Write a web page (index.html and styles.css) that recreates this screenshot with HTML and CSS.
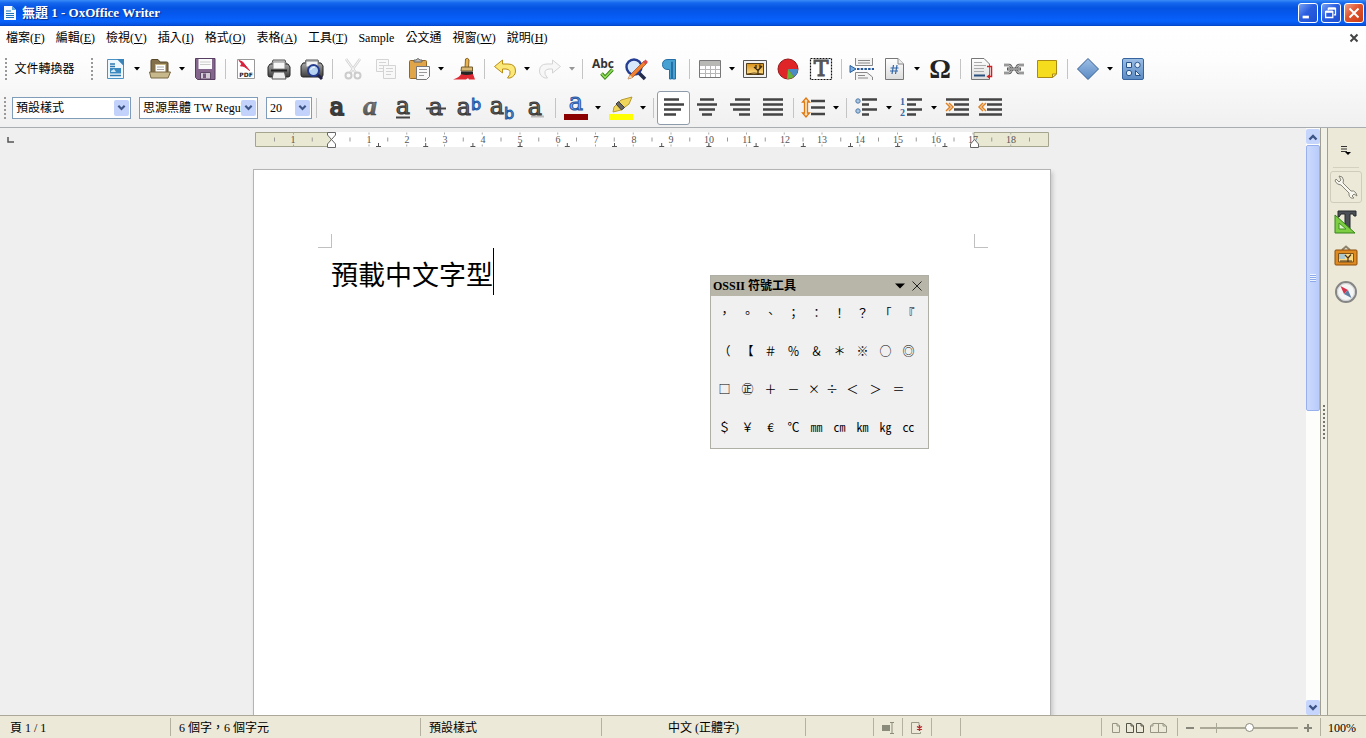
FILE: index.html
```html
<!DOCTYPE html>
<html lang="zh-Hant">
<head>
<meta charset="utf-8">
<title>無題 1 - OxOffice Writer</title>
<link rel="stylesheet" href="styles.css">
</head>
<body>
<svg class="defs" aria-hidden="true">
  <defs>
    <linearGradient id="paper" x1="0" y1="0" x2="0" y2="1"><stop offset="0" stop-color="#fff"/><stop offset="1" stop-color="#dcdcdc"/></linearGradient>
    <linearGradient id="metal" x1="0" y1="0" x2="0" y2="1"><stop offset="0" stop-color="#a8a8a8"/><stop offset="1" stop-color="#3c3c3c"/></linearGradient>
    <linearGradient id="ink" x1="0" y1="0" x2="0" y2="1"><stop offset="0" stop-color="#989898"/><stop offset="1" stop-color="#484848"/></linearGradient>
    <linearGradient id="blue" x1="0" y1="0" x2="0" y2="1"><stop offset="0" stop-color="#9dbfe6"/><stop offset="1" stop-color="#5a8ac2"/></linearGradient>
    <linearGradient id="sunset" x1="0" y1="0" x2="0" y2="1"><stop offset="0" stop-color="#d89018"/><stop offset="1" stop-color="#ffe08a"/></linearGradient>
    <symbol id="down" viewBox="0 0 6 4"><path d="M0 0H6L3 3.5Z"/></symbol>
    <symbol id="chev" viewBox="0 0 10 8"><path d="M1.5 1.5L5 5L8.500 1.500" fill="none" stroke="#3c5586" stroke-width="2.400"/></symbol>
  </defs>
</svg>

<header>
  <div class="titlebar">
    <svg class="app-icon" viewBox="0 0 12 16"><path d="M0 1H8L12 5V15H0Z" fill="#f4faff"/><path d="M8 1V5H12Z" fill="#58a6dc"/><path d="M2 6H7M2 8.500H10M2 10.500H10M2 12.500H10" stroke="#1b75b8"/></svg>
    <h1>無題 1 - OxOffice Writer</h1>
    <button class="win" aria-label="最小化"><svg viewBox="0 0 20 20"><path d="M4 14.500H11" stroke="#fff" stroke-width="3"/></svg></button>
    <button class="win" aria-label="還原"><svg viewBox="0 0 20 20" fill="none" stroke="#fff"><path d="M7 7V5H15V12H13" stroke-width="1.400"/><path d="M7 5H15" stroke-width="2.500"/><path d="M4 8.500H12V15H4Z" stroke-width="1.400"/><path d="M4 8.500H12" stroke-width="2.500"/></svg></button>
    <button class="win close" aria-label="關閉"><svg viewBox="0 0 20 20"><path d="M5 5L15 15M15 5L5 15" stroke="#fff" stroke-width="2.200"/></svg></button>
  </div>
  <nav class="menubar">
    <button>檔案(<u>F</u>)</button><button>編輯(<u>E</u>)</button><button>檢視(<u>V</u>)</button><button>插入(<u>I</u>)</button><button>格式(<u>O</u>)</button><button>表格(<u>A</u>)</button><button>工具(<u>T</u>)</button><button>Sample</button><button>公文通</button><button>視窗(<u>W</u>)</button><button>說明(<u>H</u>)</button>
    <button class="doc-close" aria-label="關閉文件"><svg viewBox="0 0 10 10"><path d="M1.500 1.500L8.500 8.500M8.500 1.500L1.500 8.500" stroke="#444" stroke-width="2"/></svg></button>
  </nav>

  <div class="toolbar">
    <i class="grip"></i><button class="convert">文件轉換器</button><i class="grip second"></i>
    <button class="tool" aria-label="新增"><svg viewBox="0 0 24 24"><path d="M4.500 2.500H15L20.500 8V21.500H4.500Z" fill="#eef7fd" stroke="#4a93c4"/><path d="M14 2H21V9Z" fill="#3a84ba"/><path d="M7 7H12M7 9.500H12M7 18.500H18" stroke="#2f78b0" stroke-width="1.500"/><path d="M7 11H18V16.500H7Z" fill="#3c89c0"/><path d="M8 14L11 12L13 15H8" fill="#cfe8f7"/></svg></button><button class="drop" aria-label="新增選項"><svg><use href="#down"/></svg></button>
    <button class="tool" aria-label="開啟"><svg viewBox="0 0 24 24"><path d="M3 18V4Q3 2.500 4 2.500H10L12 5H18.500Q20 5 20 6V15" fill="#85704c" stroke="#584828"/><path d="M7.500 7.500H17.500V17H7.500Z" fill="#fff" stroke="#c8b884"/><path d="M9 10H16M9 12.500H16" stroke="#aaa"/><path d="M1.500 15H22.500L20 21H3Z" fill="#c8b98c" stroke="#786640"/></svg></button><button class="drop" aria-label="開啟選項"><svg><use href="#down"/></svg></button>
    <button class="tool" aria-label="儲存"><svg viewBox="0 0 24 24"><path d="M2.500 1.500H22V22.500H4.500L2.500 20.500Z" fill="#84658c" stroke="#573d60"/><path d="M5.500 2H19V12H5.500Z" fill="#fafafa"/><path d="M7 5H17.500M7 7.500H17.500" stroke="#ccc"/><path d="M7.500 15.500H17.500V22H7.500Z" fill="#d3cbd6" stroke="#5e4867"/><path d="M10 16.500H13V21H10Z" fill="#765881"/></svg></button><i class="sep"></i>
    <button class="tool" aria-label="匯出為 PDF"><svg viewBox="0 0 24 24"><path d="M3.500 2.500H20.500V21.500H3.500Z" fill="#fff" stroke="#999"/><path d="M5 3.500Q9 4 11 8L15.500 13.500L11 10Q9 8.500 6.500 9Q9 7 5 3.500Z" fill="#d9203c" stroke="#d9203c"/><text x="12" y="20" text-anchor="middle" class="pdf">PDF</text></svg></button>
    <button class="tool" aria-label="列印"><svg viewBox="0 0 24 24"><path d="M6 3H18L20 9H4Z" fill="#ddd" stroke="#555"/><path d="M3 7H21L23 10V18Q23 20 21 20H3Q1 20 1 18V10Z" fill="url(#metal)" stroke="#252525"/><path d="M6 5H18V12H6Z" fill="#f8f8f8" stroke="#888"/><path d="M4 13.500H20" stroke="#222" stroke-width="2"/><path d="M6.500 15H17.500L19 22H5Z" fill="#eee" stroke="#555"/></svg></button>
    <button class="tool" aria-label="預覽列印"><svg viewBox="0 0 24 24"><path d="M6 3H18L20 9H4Z" fill="#ddd" stroke="#555"/><path d="M3 6H21L23 9V18Q23 20 21 20H3Q1 20 1 18V9Z" fill="url(#metal)" stroke="#252525"/><path d="M6 4H18V10H6Z" fill="#f4f4f4" stroke="#888"/><path d="M17 17L22 22" stroke="#232348" stroke-width="3"/><circle cx="13.500" cy="13.500" r="5.500" fill="#b6d2f1" stroke="#263c90" stroke-width="2"/><path d="M10.500 13Q12 10 15 10" fill="none" stroke="#fff"/></svg></button><i class="sep"></i>
    <button class="tool faded" aria-label="剪下" disabled><svg viewBox="0 0 24 24"><path d="M5 2L15 16M19 2L9 16" stroke="#999" stroke-width="2.500"/><path d="M5 2L15 16M19 2L9 16" stroke="#eee"/><circle cx="7.500" cy="18.500" r="3" fill="none" stroke="#888" stroke-width="2"/><circle cx="16.500" cy="18.500" r="3" fill="none" stroke="#888" stroke-width="2"/></svg></button>
    <button class="tool faded" aria-label="複製" disabled><svg viewBox="0 0 24 24" fill="#f6f6f6" stroke="#999"><path d="M2.500 2.500H14.500V14.500H2.500Z"/><path d="M5 5.500H12M5 8.500H12M5 11.500H12"/><path d="M9.500 8.500H21.500V21.500H9.500Z"/><path d="M12 11.500H19M12 14.500H19M12 17.500H17"/></svg></button>
    <button class="tool" aria-label="貼上"><svg viewBox="0 0 24 24"><rect x="2.500" y="3.500" width="17" height="18" rx="1" fill="#e0a548" stroke="#936721"/><path d="M7 5V3H9Q11 0 13 3H15V5Z" fill="#bbb" stroke="#666"/><path d="M9.500 9.500H22.500V19.500L19.500 22.500H9.500Z" fill="#fafafa" stroke="#777"/><path d="M12 12.500H20M12 15.500H20M12 18.500H17" stroke="#999"/></svg></button><button class="drop" aria-label="貼上選項"><svg><use href="#down"/></svg></button>
    <button class="tool" aria-label="複製格式"><svg viewBox="0 0 24 24"><path d="M13.500 2Q16 0 17 3L16.500 11H13Z" fill="#e8b351" stroke="#8c6220"/><path d="M9.500 10H20.500V14H9Z" fill="#d8b873" stroke="#755b2b"/><path d="M9 14.500H21V18H9Z" fill="#262626"/><path d="M1 22.500Q8 20 9 17Q14 19 21 17L23 22.500H17L16 21L14 22.500Z" fill="#df2a34"/></svg></button><i class="sep"></i>
    <button class="tool" aria-label="復原"><svg viewBox="0 0 24 24"><path d="M1.500 9.500L9.500 3V7H15Q22.500 7 22.500 14Q22.500 19 17 21H14.500Q18 17 17 14.500Q16 12 13 12H9.500V16Z" fill="#fbe878" stroke="#b88e16"/></svg></button><button class="drop" aria-label="復原選項"><svg><use href="#down"/></svg></button>
    <button class="tool faded" aria-label="重做" disabled><svg viewBox="0 0 24 24"><path d="M22.500 9.500L14.500 3V7H9Q1.500 7 1.500 14Q1.500 19 7 21H9.500Q6 17 7 14.500Q8 12 11 12H14.500V16Z" fill="#f2f2f2" stroke="#999"/></svg></button><button class="drop faded" aria-label="重做選項" disabled><svg><use href="#down"/></svg></button><i class="sep"></i>
    <button class="tool" aria-label="拼字檢查"><svg viewBox="0 0 24 24"><text x="12" y="11" text-anchor="middle" class="abc">Abc</text><path d="M10.500 16.500L14 20.500L21.500 12.500" fill="none" stroke="#357f16" stroke-width="3.500"/><path d="M10.500 16.500L14 20.500L21.500 12.500" fill="none" stroke="#91dc59" stroke-width="1.800"/></svg></button>
    <button class="tool" aria-label="尋找與取代"><svg viewBox="0 0 24 24"><path d="M15 16L21 22" stroke="#242c4c" stroke-width="3.500"/><circle cx="10" cy="10" r="7.500" fill="#d7e8fc" stroke="#243c91" stroke-width="2.400"/><path d="M4 22L6 18L20 4L22.500 6.500L8.500 20.500Z" fill="#f08030" stroke="#9b481b" stroke-width=".7"/><path d="M19 5L21.500 2.500L24 5L21.500 7.500Z" fill="#d94a4a"/><path d="M4 22L6 18L8.500 20.500Z" fill="#eed5a5"/></svg></button>
    <button class="tool" aria-label="非列印字元"><svg viewBox="0 0 24 24"><path d="M12.500 12.500H11Q5.500 12.500 5.500 7.500Q5.500 2.500 11 2.500H18.500V22H15.500V5H14.500V22H12.500Z" fill="#46a1d2" stroke="#236fa6"/></svg></button><i class="sep"></i>
    <button class="tool" aria-label="表格"><svg viewBox="0 0 24 24"><path d="M1.500 3.500H22.500V20.500H1.500Z" fill="#fff" stroke="#777"/><path d="M2 4H22V8H2Z" fill="#b8b8b4"/><path d="M2 8.500H22M2 12.500H22M2 16.500H22M7.500 8V20M12.500 8V20M17.500 8V20" stroke="#b7b7b7"/></svg></button><button class="drop" aria-label="表格選項"><svg><use href="#down"/></svg></button>
    <button class="tool" aria-label="圖片"><svg viewBox="0 0 24 24"><path d="M.5 3.500H23.500V20.500H.5Z" fill="#f2f2f2" stroke="#555"/><path d="M3.500 6.500H20.500V17.500H3.500Z" fill="url(#sunset)" stroke="#554018"/><path d="M15 18V13.500L11 10M15 13.500L19 9M13 11V8M17 11V7.500" fill="none" stroke="#392911" stroke-width="1.300"/><path d="M4 17Q10 15 20 17" fill="none" stroke="#5f4014"/></svg></button>
    <button class="tool" aria-label="圖表"><svg viewBox="0 0 24 24"><circle cx="12" cy="12" r="10" fill="#df2528" stroke="#97191b"/><path d="M12 12H22A10 10 0 0 1 18 20Z" fill="#4b8bc5"/><path d="M12 12L18 20Q15 22 11 22Z" fill="#65b53a"/></svg></button>
    <button class="tool" aria-label="文字方塊"><svg viewBox="0 0 24 24"><path d="M1.500 1.500H22.500V22.500H1.500Z" fill="#fff" stroke="#111" stroke-width="1.200" stroke-dasharray="2 1"/><text x="12" y="19" text-anchor="middle" class="tglyph">T</text></svg></button><i class="sep"></i>
    <button class="tool" aria-label="分頁"><svg viewBox="0 0 24 24"><path d="M5.500 1V8.500H22.500V1M8 3.500H20M8 6H20" fill="#f4f4f4" stroke="#888"/><path d="M0 8.500L6 12L0 15.500Z" fill="#78afe5" stroke="#275b99"/><path d="M7 12H24" stroke="#25579b" stroke-width="2" stroke-dasharray="2.500 1.200"/><path d="M5.500 23V15.500H17L22.500 20V23M8 18.500H15M8 21H18" fill="#f4f4f4" stroke="#888"/></svg></button>
    <button class="tool" aria-label="欄位"><svg viewBox="0 0 24 24"><path d="M2.500 1.500H15L20.500 7V22.500H2.500Z" fill="url(#paper)" stroke="#777"/><path d="M15 1.500V7H20.500" fill="#eee" stroke="#888"/><path d="M10.500 8L9 17M14 8L12.500 17M7.500 11H15.500M7 14H15" stroke="#3568a8" stroke-width="1.200"/></svg></button><button class="drop" aria-label="欄位選項"><svg><use href="#down"/></svg></button>
    <button class="tool" aria-label="特殊字元"><svg viewBox="0 0 24 24"><text x="12" y="21" text-anchor="middle" class="omega">Ω</text></svg></button><i class="sep"></i>
    <button class="tool" aria-label="註腳"><svg viewBox="0 0 24 24"><path d="M2.500 1.500H15L20.500 7V22.500H2.500Z" fill="url(#paper)" stroke="#777"/><path d="M5 5.500H13M5 8.500H17M5 11.500H15M5 14.500H15" stroke="#aaa"/><path d="M5 18.500H16" stroke="#294f7d" stroke-width="2"/><path d="M18 9.500H22.500V19.500H19" fill="none" stroke="#d02024" stroke-width="1.500"/><path d="M21 17V22L17.500 19.500Z" fill="#d02024"/></svg></button>
    <button class="tool" aria-label="超連結"><svg viewBox="0 0 24 24" fill="none"><path d="M2 8H7Q9 8 10 12Q9 16 7 16H2M22 8H17Q15 8 14 12Q15 16 17 16H22" stroke="#555" stroke-width="2.500"/><path d="M2 8H7Q9 8 10 12Q9 16 7 16H2M22 8H17Q15 8 14 12Q15 16 17 16H22" stroke="#ddd"/><path d="M5 12H19" stroke="#555" stroke-width="3"/><path d="M6 12H18" stroke="#ddd"/></svg></button>
    <button class="tool" aria-label="註解"><svg viewBox="0 0 24 24"><path d="M2.500 3.500H21.500V17L17.500 20.500H2.500Z" fill="#f5dc1c" stroke="#aa8a14"/><path d="M17.500 20.500V17H21.500Z" fill="#fff5a0" stroke="#aa8a14"/></svg></button><i class="sep"></i>
    <button class="tool" aria-label="基本形狀"><svg viewBox="0 0 24 24"><path d="M12 1.500L22.500 12L12 22.500L1.500 12Z" fill="url(#blue)" stroke="#355f94"/></svg></button><button class="drop" aria-label="形狀選項"><svg><use href="#down"/></svg></button>
    <button class="tool" aria-label="繪圖功能"><svg viewBox="0 0 24 24"><rect x="1.500" y="1.500" width="21" height="21" rx="1.500" fill="url(#blue)" stroke="#3564a0"/><path d="M5.500 5.500H10.500V10.500H5.500ZM14.500 13.500V18.500H19.500Z" fill="#e4f0fc" stroke="#28548b"/><circle cx="16.500" cy="8" r="2.700" fill="#e4f0fc" stroke="#28548b"/><circle cx="8" cy="16" r="2.700" fill="#e4f0fc" stroke="#28548b"/></svg></button>
  </div>

  <div class="toolbar format">
    <i class="grip"></i>
    <label class="combo style"><select aria-label="段落樣式"><option>預設樣式</option></select><svg><use href="#chev"/></svg></label>
    <label class="combo font"><select aria-label="字型名稱"><option>思源黑體 TW Regular</option></select><svg><use href="#chev"/></svg></label>
    <label class="combo size"><select aria-label="字型大小"><option>20</option></select><svg><use href="#chev"/></svg></label><i class="sep"></i>
    <button class="tool" aria-label="粗體"><svg viewBox="0 0 24 24"><text x="12" y="19" text-anchor="middle" class="letter heavy">a</text></svg></button>
    <button class="tool" aria-label="斜體"><svg viewBox="0 0 24 24"><text x="12" y="19" text-anchor="middle" class="letter slant">a</text></svg></button>
    <button class="tool" aria-label="底線"><svg viewBox="0 0 24 24"><text x="12" y="18" text-anchor="middle" class="letter">a</text><path d="M5 21.500H19" stroke="#444" stroke-width="2"/></svg></button>
    <button class="tool" aria-label="刪除線"><svg viewBox="0 0 24 24"><text x="12" y="19" text-anchor="middle" class="letter">a</text><path d="M2 12.500H22" stroke="#444" stroke-width="2"/></svg></button>
    <button class="tool" aria-label="上標"><svg viewBox="0 0 24 24"><text x="7" y="19" text-anchor="middle" class="letter">a</text><text x="19" y="14" text-anchor="middle" class="index">b</text></svg></button>
    <button class="tool" aria-label="下標"><svg viewBox="0 0 24 24"><text x="7" y="18" text-anchor="middle" class="letter">a</text><text x="19" y="23" text-anchor="middle" class="index">b</text></svg></button>
    <button class="tool" aria-label="陰影"><svg viewBox="0 0 24 24"><path d="M8 20.500H21" stroke="#bbb" stroke-width="2"/><text x="12" y="19" text-anchor="middle" class="letter">a</text></svg></button><i class="sep"></i>
    <button class="tool" aria-label="字型顏色"><svg viewBox="0 0 24 24"><text x="12" y="14" text-anchor="middle" class="letter azure">a</text><path d="M0 18H24V24H0Z" fill="#8b0000"/></svg></button><button class="drop" aria-label="字型顏色選項"><svg><use href="#down"/></svg></button>
    <button class="tool" aria-label="強調顯示"><svg viewBox="0 0 24 24"><path d="M4 16L5 11L12 4L23 1L20 8L12 14L8 15Z" fill="#f1d65c" stroke="#b59a30"/><path d="M9.500 5.500L15.500 11.500L12.500 14L7 8Z" fill="#666" stroke="#3c3c3c"/><path d="M0 18H24V24H0Z" fill="#ff0"/></svg></button><button class="drop" aria-label="強調顯示選項"><svg><use href="#down"/></svg></button><i class="sep"></i>
    <button class="tool pressed" aria-label="靠左對齊"><svg viewBox="0 0 24 24"><path d="M2 3.500H17M2 8.500H22M2 13.500H19M2 18.500H14" class="bars"/></svg></button>
    <button class="tool" aria-label="置中對齊"><svg viewBox="0 0 24 24"><path d="M5 3.500H19M2 8.500H22M4 13.500H20M7 18.500H17" class="bars"/></svg></button>
    <button class="tool" aria-label="靠右對齊"><svg viewBox="0 0 24 24"><path d="M7 3.500H22M2 8.500H22M5 13.500H22M11 18.500H22" class="bars"/></svg></button>
    <button class="tool" aria-label="左右對齊"><svg viewBox="0 0 24 24"><path d="M2 3.500H22M2 8.500H22M2 13.500H22M2 18.500H22" class="bars"/></svg></button><i class="sep"></i>
    <button class="tool" aria-label="行距"><svg viewBox="0 0 24 24"><path d="M4 2L7.500 6H5.500V17H7.500L4 21L0.500 17H2.500V6H0.500Z" fill="#ffe3bc" stroke="#dd7812" stroke-width="1.300"/><path d="M9 5H23M9 11.500H23M9 18H23" class="bars"/></svg></button><button class="drop" aria-label="行距選項"><svg><use href="#down"/></svg></button><i class="sep"></i>
    <button class="tool" aria-label="項目符號"><svg viewBox="0 0 24 24"><g fill="#aac6e2" stroke="#507ca8"><circle cx="3" cy="5" r="2.200"/><circle cx="3" cy="15" r="2.200"/></g><path d="M7 3.500H22M7 8.500H14M7 13.500H22M7 18.500H14" class="bars"/></svg></button><button class="drop" aria-label="項目符號選項"><svg><use href="#down"/></svg></button>
    <button class="tool" aria-label="編號"><svg viewBox="0 0 24 24"><text x="0" y="9" class="num">1</text><text x="0" y="20" class="num">2</text><path d="M7 3.500H22M7 8.500H16M7 13.500H22M7 18.500H16" class="bars"/></svg></button><button class="drop" aria-label="編號選項"><svg><use href="#down"/></svg></button>
    <button class="tool" aria-label="增加縮排"><svg viewBox="0 0 24 24"><path d="M1 3.500H24M9 8.500H24M9 13.500H24M1 18.500H24" class="bars"/><path d="M1 7L5 11L1 15M4 7L8 11L4 15" fill="none" stroke="#df8224" stroke-width="1.500"/></svg></button>
    <button class="tool" aria-label="減少縮排"><svg viewBox="0 0 24 24"><path d="M1 3.500H24M9 8.500H24M9 13.500H24M1 18.500H24" class="bars"/><path d="M5 7L1 11L5 15M8 7L4 11L8 15" fill="none" stroke="#df8224" stroke-width="1.500"/></svg></button>
  </div>
</header>

<main>
  <section class="canvas">
    <svg class="corner" viewBox="0 0 8 6"><path d="M1 0V5H7" fill="none" stroke="#555" stroke-width="1.500"/></svg>
    <svg class="ruler" viewBox="0 0 794 16">
      <path d="M0 0H794V15H0Z" fill="#fff"/>
      <path d="M.5 .5H76V14.500H.5ZM719 .5H793.500V14.500H719Z" fill="#e9e8d2" stroke="#a4a48f"/>
      <path d="M19 7.500H790" stroke="#999" stroke-width="4" stroke-dasharray="1 36.750"/>
      <path d="M38 1.500H760M38 13.500H760" stroke="#aaa" stroke-width="2" stroke-dasharray="1 36.750"/>
      <path d="M121 14.500H700" stroke="#555" stroke-dasharray="5 42.200"/>
      <path d="M123 12.500H700" stroke="#555" stroke-width="3" stroke-dasharray="1 46.200"/>
      <g><text x="38" y="11">1</text><text x="114" y="11">1</text><text x="152" y="11">2</text><text x="190" y="11">3</text><text x="228" y="11">4</text><text x="265" y="11">5</text><text x="303" y="11">6</text><text x="341" y="11">7</text><text x="379" y="11">8</text><text x="416" y="11">9</text><text x="454" y="11">10</text><text x="492" y="11">11</text><text x="530" y="11">12</text><text x="567" y="11">13</text><text x="605" y="11">14</text><text x="643" y="11">15</text><text x="681" y="11">16</text><text x="718" y="11">17</text><text x="756" y="11">18</text></g>
      <path d="M72.500 .5H80.500V3L76.500 7.500L72.500 3ZM76.500 7.500L80.500 12V15.500H72.500V12ZM719.500 7.500L723.500 12V15.500H715.500V12Z" fill="#fff" stroke="#666"/>
    </svg>
    <article class="page">
      <div class="crops"><i></i><i></i></div>
      <p>預載中文字型<span class="caret"></span></p>
    </article>

    <section class="symbols" aria-label="OSSII 符號工具">
      <header><h2>OSSII 符號工具</h2>
        <button aria-label="選項"><svg viewBox="0 0 12 12"><path d="M1 3.500H11L6 8.500Z"/></svg></button>
        <button aria-label="關閉"><svg viewBox="0 0 12 12"><path d="M1.500 1.500L10.500 10.500M10.500 1.500L1.500 10.500" stroke="#222"/></svg></button>
      </header>
      <div class="row"><button>，</button><button>。</button><button>、</button><button>；</button><button>：</button><button>！</button><button>？</button><button>「</button><button>『</button></div>
      <div class="row"><button>（</button><button>【</button><button>＃</button><button>％</button><button>＆</button><button>＊</button><button>※</button><button>○</button><button>◎</button></div>
      <div class="row"><button>□</button><button>㊣</button><button>＋</button><button>－</button><button class="half">×</button><button class="half">÷</button><button>＜</button><button>＞</button><button>＝</button></div>
      <div class="row"><button>＄</button><button>￥</button><button>€</button><button>℃</button><button>㎜</button><button>㎝</button><button>㎞</button><button>㎏</button><button>㏄</button></div>
    </section>
  </section>

  <div class="scroll">
    <button class="up" aria-label="向上捲動"><svg><use href="#chev"/></svg></button>
    <div class="track"><div class="thumb"><i></i></div></div>
    <button aria-label="向下捲動"><svg><use href="#chev"/></svg></button>
  </div>
  <div class="splitter"><i></i></div>
  <aside>
    <button class="deck-menu" aria-label="側邊欄設定"><svg viewBox="0 0 12 12"><path d="M1 2.500H7M1 5H7M1 7.500H7" stroke="#333"/><path d="M5 8H11L8 11Z"/></svg></button>
    <hr>
    <button class="deck active" aria-label="屬性"><svg viewBox="0 0 24 24"><path d="M5 1Q9 1 9.500 5L9 8L17 16Q20 15 22 18L23 21L20 19L18 21L20 23Q16 24 15 20L15 18L7 10Q3 10 1 6L2 4L5 7L7 5Z" fill="#f8f7f0" stroke="#858477"/></svg></button>
    <button class="deck" aria-label="樣式"><svg viewBox="0 0 24 24"><path d="M4 1H22V6H20L19 4H16V20H11V4H7L5 7H4Z" fill="#4b5056" stroke="#262a2e"/><path d="M1 5V23H21Z" fill="#7dce43" stroke="#36831a"/><path d="M5 13V19H12Z" fill="#ddf3cb" stroke="#439322"/></svg></button>
    <button class="deck" aria-label="圖庫"><svg viewBox="0 0 24 24"><path d="M8 5L12 1.500L16 5" fill="none" stroke="#8d826b" stroke-width="2"/><rect x="1" y="5" width="22" height="15" rx="1" fill="#e08b22" stroke="#8a4d0d"/><path d="M4.500 8.500H19.500V17H4.500Z" fill="#fbd982" stroke="#7e531a"/><path d="M5 9H11V14H5Z" fill="#a9c7cc"/><path d="M14 17V13L11 10M14 13L17 9.500M6 16H18" fill="none" stroke="#49331a" stroke-width="1.200"/></svg></button>
    <button class="deck" aria-label="導覽"><svg viewBox="0 0 24 24"><circle cx="12" cy="12" r="10" fill="#f4f6f6" stroke="#858585" stroke-width="2"/><circle cx="12" cy="12" r="8.500" fill="none" stroke="#d0d0d0"/><path d="M6.500 6L14 10L10 14Z" fill="#d6344c"/><path d="M17.500 18L14 10L10 14Z" fill="#5d7da2"/></svg></button>
  </aside>
</main>

<footer>
  <span class="cell pageno">頁 1 / 1</span>
  <span class="cell words">6 個字，6 個字元</span>
  <span class="cell pstyle">預設樣式</span>
  <span class="cell lang">中文 (正體字)</span>
  <span class="cell blank"></span>
  <span class="cell mini"><svg viewBox="0 0 14 14"><path d="M1 4H9V10H1Z" fill="#8b8b7c"/><path d="M9 1.500H13M11 2V12M9 12.500H13" stroke="#8b8b7c"/></svg></span>
  <span class="cell mini"><svg viewBox="0 0 14 14"><path d="M9 1.500H1.500V12.500H10.500V11M9 1.500V4" fill="none" stroke="#999887"/><path d="M9.500 4V10M7 5.500L12 8.500M12 5.500L7 8.500" stroke="#b4272d" stroke-width="1.400"/></svg></span>
  <span class="cell mini"></span>
  <span class="cell spacer"></span>
  <span class="cell views">
    <button aria-label="單頁"><svg class="one" viewBox="0 0 10 12"><path d="M1.500 1.500H6L8.500 4V10.500H1.500ZM6 1.500V4H8.500" fill="none" stroke="#969585"/></svg></button>
    <button aria-label="多頁"><svg viewBox="0 0 20 12"><path d="M1.500 1.500H6L8.500 4V10.500H1.500ZM6 1.500V4H8.500M11.500 1.500H16L18.500 4V10.500H11.500ZM16 1.500V4H18.500" fill="none" stroke="#545448"/></svg></button>
    <button aria-label="書本"><svg viewBox="0 0 20 12"><path d="M9.500 1.500H4L1.500 4V10.500H9.500ZM4 1.500V4H1.500M9.500 1.500H14L17.500 4V10.500H9.500ZM14 1.500V4H17" fill="none" stroke="#969585"/></svg></button>
  </span>
  <span class="cell zoom">
    <button aria-label="縮小"><svg viewBox="0 0 10 10"><path d="M1 5H9" stroke="#87867a" stroke-width="2"/></svg></button>
    <input type="range" min="0" max="100" value="50" aria-label="縮放">
    <button aria-label="放大"><svg viewBox="0 0 10 10"><path d="M1 5H9M5 1V9" stroke="#87867a" stroke-width="2"/></svg></button>
  </span>
  <span class="cell percent">100%</span>
</footer>
</body>
</html>
```
FILE: styles.css
```css
* { box-sizing: border-box; }
body {
  margin: 0;
  height: 100vh;
  display: flex;
  flex-direction: column;
  overflow: hidden;
  background: #efefef;
  color: #000;
  font: 12px/16px "Liberation Serif", "Noto Sans CJK TC", serif;
}
button {
  display: flex;
  align-items: center;
  justify-content: center;
  padding: 0;
  border: 0;
  background: none;
  color: inherit;
  font: inherit;
  white-space: nowrap;
  flex: none;
}
svg { display: block; flex: none; overflow: visible; }
h1, h2, p { margin: 0; }
.defs { position: absolute; width: 0; height: 0; }

/* Title bar */
.titlebar {
  display: flex;
  align-items: center;
  gap: 3px;
  height: 26px;
  padding: 0 2px 0 4px;
  background: linear-gradient(#3a8cf8 0, #1567ee 3px, #0553e2 8px, #0558ee 14px, #0762fc 21px, #0550dd 25px, #0340bd);
}
.app-icon { width: 12px; height: 16px; }
.titlebar h1 {
  flex: 1;
  padding-left: 3px;
  color: #fff;
  font-size: 13px;
  font-weight: bold;
  text-shadow: 1px 1px 1px #0a2a80;
}
.win {
  width: 20px;
  height: 20px;
  border: 1px solid #fff;
  border-radius: 3px;
  background: linear-gradient(135deg, #7aa2f4, #2a5ee0 45%, #1d4fd0);
}
.win.close { background: linear-gradient(135deg, #f0a088, #e0532c 45%, #c83c16); }
.win svg { width: 18px; height: 18px; }

/* Menus and toolbars */
body > header {
  flex: none;
  background: linear-gradient(#fff 26px, #fdfdfd 60px, #f0f0f0);
  border-bottom: 1px solid #a9adb0;
}
.menubar {
  display: flex;
  align-items: center;
  gap: 11px;
  height: 24px;
  padding: 0 7px 0 6px;
}
.doc-close { margin-left: auto; }
.doc-close svg { width: 10px; height: 10px; }
.toolbar {
  display: flex;
  align-items: center;
  height: 38px;
  padding-left: 5px;
}
.toolbar.format { height: 39px; padding-left: 4px; }
.grip {
  flex: none;
  width: 8px;
  height: 22px;
  background: repeating-linear-gradient(#999 0 2px, transparent 2px 4px) 0 0 / 2px 100% no-repeat;
}
.convert { width: 63px; }
.grip.second { margin-left: 15px; width: 7px; }
.tool { width: 33px; height: 34px; }
.tool svg { width: 24px; height: 24px; }
.tool.pressed { border: 1px solid #8e9bab; border-radius: 3px; background: #fff; }
.drop { width: 12px; height: 34px; }
.drop svg { width: 6px; height: 4px; }
.faded { opacity: .4; }
.sep {
  flex: none;
  width: 8px;
  height: 20px;
  background: linear-gradient(#c4c4c4, #c4c4c4) 4px 0 / 1px 100% no-repeat;
}
.combo {
  position: relative;
  flex: none;
  height: 22px;
  margin-right: 8px;
  border: 1px solid #7f9db9;
  background: #fff;
}
.combo.style, .combo.font { width: 119px; }
.combo.size { width: 46px; margin-right: 0; }
.combo select {
  appearance: none;
  width: 100%;
  height: 20px;
  padding: 0 16px 0 3px;
  border: 0;
  background: none;
  color: #000;
  font: inherit;
}
.combo svg {
  position: absolute;
  top: 2px;
  right: 1px;
  width: 15px;
  height: 16px;
  padding: 4px 3px;
  border-radius: 2px;
  background: #c2d2fb;
  pointer-events: none;
}

/* Letters inside icons */
.letter { font: 24px "DejaVu Serif", serif; fill: url(#ink); stroke: #3a3a3a; stroke-width: 1px; }
.heavy { stroke-width: 2px; }
.slant { font: italic bold 28px "Liberation Serif", serif; stroke-width: .5px; }
.azure { fill: #8cb6ee; stroke: #2856a5; }
.index { font: 16px "DejaVu Sans", sans-serif; fill: #75a8de; stroke: #1f5aa5; stroke-width: 1px; }
.abc { font: bold 12px "Open Sans", sans-serif; fill: #333; }
.pdf { font: bold 6px "DejaVu Sans", sans-serif; fill: #222; }
.tglyph { font: 22px "DejaVu Serif", serif; fill: #555; stroke: #555; }
.omega { font: bold 27px "Liberation Serif", serif; fill: #222; }
.num { font: bold 10px "Liberation Serif", serif; fill: #3068a8; }
.bars { fill: none; stroke: #444; stroke-width: 2.5px; }

/* Workspace */
main { flex: 1; display: flex; min-height: 0; }
.canvas {
  position: relative;
  flex: 1;
  display: flex;
  flex-direction: column;
  align-items: center;
  padding-right: 2px;
  overflow: hidden;
  background: #efefef;
}
.corner { position: absolute; left: 7px; top: 9px; width: 8px; height: 6px; }
.ruler { width: 794px; height: 16px; margin-top: 4px; flex: none; }
.ruler text { font: 10px "Liberation Serif", serif; fill: #555; text-anchor: middle; }
.page {
  flex: 1;
  width: 798px;
  margin-top: 21px;
  padding: 64px 62px 0 64px;
  border: 1px solid #b4b4b4;
  border-bottom: 0;
  background: #fff;
  box-shadow: 2px 3px 4px #c8c8c8;
}
.crops { display: flex; justify-content: space-between; }
.crops i { width: 14px; height: 14px; border: 0 solid #c0c0c0; border-width: 0 1px 1px 0; }
.crops i + i { border-width: 0 0 1px 1px; }
.page p {
  display: flex;
  align-items: center;
  padding-left: 13px;
  height: 47px;
  font: 27px/56px "Noto Sans CJK TC", sans-serif;
  padding-top: 4px;
}
.caret { align-self: flex-end; width: 1px; height: 47px; background: #000; }

/* Floating symbol toolbar */
.symbols {
  position: absolute;
  left: 710px;
  top: 147px;
  width: 219px;
  border: 1px solid #b0afa6;
  background: #f0f0f0;
}
.symbols header {
  display: flex;
  align-items: center;
  gap: 5px;
  height: 20px;
  padding: 0 5px 0 2px;
  background: #b8b6a8;
}
.symbols h2 { flex: 1; font-size: 12px; font-weight: bold; }
.symbols header svg { width: 12px; height: 12px; }
.row { display: flex; height: 38px; padding-left: 2px; }
.row button { width: 23px; height: 34px; font-size: 12px; font-family: "Noto Sans CJK TC", sans-serif; }
.row .half { width: 18px; }

/* Scroll bar */
.scroll { display: flex; flex-direction: column; width: 14px; background: #fdfdfb; }
.scroll button { height: 15px; margin-top: 1px; border-radius: 2px; background: #c5d5fc; }
.scroll svg { width: 10px; height: 8px; }
.scroll .up svg { transform: rotate(180deg); }
.track { flex: 1; padding-top: 1px; }
.thumb {
  display: flex;
  align-items: center;
  justify-content: center;
  height: 48%;
  border: 1px solid #98b0ee;
  border-radius: 2px;
  background: linear-gradient(90deg, #cbdafe, #b8cbfa);
}
.thumb i { width: 6px; height: 8px; background: repeating-linear-gradient(#edf3ff 0 1px, #8daae8 1px 2px); }
.splitter {
  display: flex;
  align-items: center;
  justify-content: center;
  width: 8px;
  border-left: 1px solid #a09f92;
  border-right: 1px solid #a09f92;
  background: #f2f1e7;
}
.splitter i { width: 2px; height: 34px; background: repeating-linear-gradient(#77766b 0 2px, transparent 2px 4px); }
aside {
  display: flex;
  flex-direction: column;
  align-items: center;
  gap: 3px;
  width: 38px;
  padding: 8px 2px 0 0;
  background: #ece9d8;
}
.deck-menu { width: 28px; height: 28px; }
.deck-menu svg { width: 12px; height: 12px; }
aside hr { width: 26px; margin: 0; border: 0; border-top: 1px solid #d4d2bf; }
.deck { width: 32px; height: 32px; border: 1px solid transparent; border-radius: 3px; }
.deck.active { border-color: #cfccb9; }
.deck svg { width: 24px; height: 24px; }

/* Status bar */
footer {
  display: flex;
  align-items: center;
  flex: none;
  height: 23px;
  border-top: 1px solid #aca899;
  background: #ece9d8;
}
.cell {
  display: flex;
  align-items: center;
  flex: none;
  height: 18px;
  padding-top: 1px;
  border-right: 1px solid #b4b1a0;
  white-space: nowrap;
}
.pageno { width: 171px; padding-left: 10px; }
.words { width: 250px; padding-left: 8px; }
.pstyle { width: 181px; padding-left: 8px; }
.lang { width: 204px; justify-content: center; }
.blank { width: 68px; }
.mini { width: 29px; justify-content: center; }
.mini svg { width: 14px; height: 14px; }
.spacer { flex: 1; }
.views { width: 76px; gap: 4px; justify-content: center; }
.views svg { width: 20px; height: 12px; }
.views .one { width: 10px; }
.zoom { width: 143px; gap: 5px; justify-content: center; }
.zoom svg { width: 10px; height: 10px; }
.zoom input {
  appearance: none;
  width: 98px;
  height: 12px;
  margin: 0;
  background:
    linear-gradient(#aaa897, #aaa897) 16px 1px / 1px 10px no-repeat,
    linear-gradient(#aaa897, #aaa897) 0 5px / 100% 2px no-repeat;
}
.zoom input::-webkit-slider-thumb {
  appearance: none;
  width: 9px;
  height: 9px;
  border: 1px solid #8b897b;
  border-radius: 50%;
  background: #fff;
}
.percent { width: 45px; padding-left: 7px; border-right: 0; }
```
